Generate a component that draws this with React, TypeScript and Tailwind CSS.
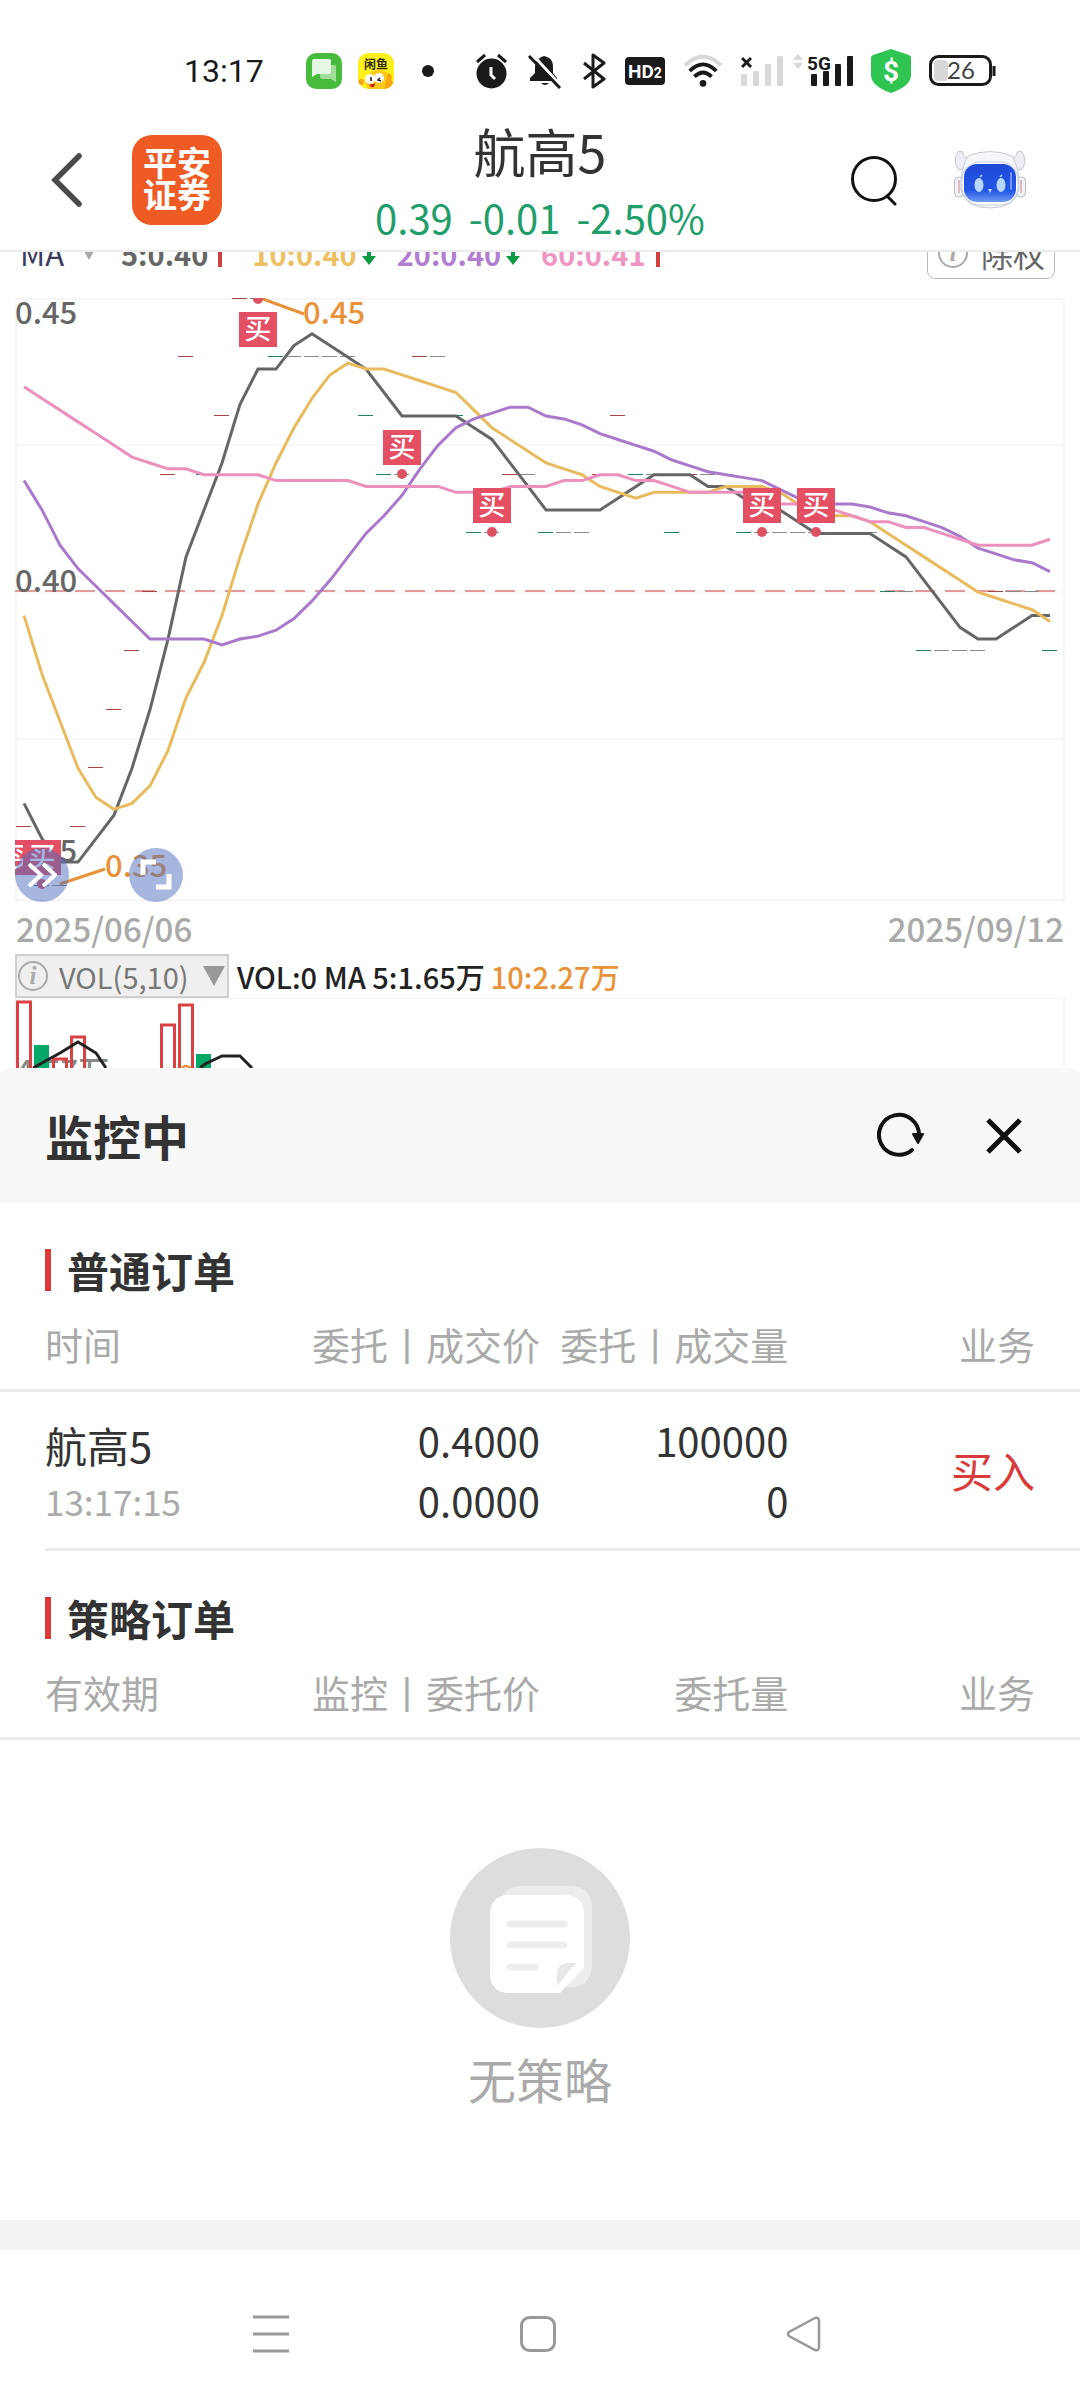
import React from "react";

const CANDLE_STEP = 18;
const FIRST_X = 24;

// closes from before the first visible candle, needed by the averages
const history = [
  0.45, 0.47, 0.44, 0.43, 0.44, 0.45, 0.46, 0.42, 0.44, 0.42, 0.45, 0.43, 0.44,
  0.42, 0.4, 0.38, 0.37, 0.36, 0.35,
];

const closes = [
  0.36, 0.35, 0.35, 0.36, 0.37, 0.38, 0.39, 0.4, 0.42, 0.44, 0.42, 0.43, 0.45,
  0.45, 0.44, 0.44, 0.44, 0.44, 0.44, 0.43, 0.42, 0.42, 0.44, 0.44, 0.43, 0.41,
  0.41, 0.42, 0.42, 0.41, 0.41, 0.41, 0.42, 0.43, 0.42, 0.42, 0.41, 0.42, 0.42,
  0.42, 0.41, 0.41, 0.41, 0.41, 0.41, 0.41, 0.41, 0.41, 0.4, 0.4, 0.39, 0.39,
  0.39, 0.39, 0.4, 0.4, 0.4, 0.39,
];

const ma60 = [
  0.435, 0.433, 0.431, 0.429, 0.427, 0.425, 0.423, 0.422, 0.421, 0.421, 0.42,
  0.42, 0.42, 0.42, 0.419, 0.419, 0.419, 0.419, 0.419, 0.418, 0.418, 0.418,
  0.418, 0.418, 0.417, 0.417, 0.417, 0.418, 0.418, 0.418, 0.419, 0.419, 0.42,
  0.42, 0.419, 0.419, 0.418, 0.417, 0.417, 0.417, 0.417, 0.416, 0.415, 0.415,
  0.415, 0.414, 0.413, 0.412, 0.412, 0.411, 0.411, 0.41, 0.409, 0.408, 0.408,
  0.408, 0.408, 0.409,
];

const markers = [
  { index: 0, top: 840, dot: 0 },
  { index: 1, top: 840, dot: 884 },
  { index: 13, top: 312, dot: 299 },
  { index: 21, top: 430, dot: 474 },
  { index: 26, top: 488, dot: 532 },
  { index: 41, top: 488, dot: 532 },
  { index: 44, top: 488, dot: 532 },
];

const xOf = (index: number) => FIRST_X + index * CANDLE_STEP;
const yOf = (price: number) => 298.6 + (0.45 - price) * 5870;

function average(days: number) {
  const all = [...history, ...closes];
  return closes.map((_, i) => {
    const end = history.length + i + 1;
    const sum = all.slice(end - days, end).reduce((a, b) => a + b, 0);
    return sum / days;
  });
}

function toPoints(values: number[]) {
  return values.map((v, i) => `${xOf(i)},${yOf(v)}`).join(" ");
}

function candleColor(index: number) {
  const before = index === 0 ? 0.35 : closes[index - 1];
  if (closes[index] > before) return "#a84644";
  if (closes[index] < before) return "#1f8068";
  return "#8a8a8a";
}

function StatusBar() {
  return (
    <div className="flex items-center pt-12 pl-[184px] text-[#1a1a1a]">
      <span className="w-[122px] font-[Roboto,sans-serif] text-[32px] leading-[46px]">
        13:17
      </span>
      <div className="flex gap-4">
        <svg width="36" height="36" viewBox="0 0 36 36">
          <rect width="36" height="36" rx="10" fill="#46bb3c" />
          <path
            d="M14 12h14a2 2 0 0 1 2 2v15l-5-3H16a2 2 0 0 1-2-2z"
            fill="#a2dd9b"
          />
          <path
            d="M8 6h15a2 2 0 0 1 2 2v11a2 2 0 0 1-2 2H11l-5 3V8a2 2 0 0 1 2-2z"
            fill="#e6f7e3"
          />
        </svg>
        <svg width="36" height="36" viewBox="0 0 36 36">
          <defs>
            <clipPath id="fish">
              <rect width="36" height="36" rx="10" />
            </clipPath>
          </defs>
          <g clipPath="url(#fish)">
            <rect width="36" height="36" fill="#fdf01c" />
            <ellipse cx="21" cy="29" rx="13" ry="12" fill="#ffc918" />
            <path d="M30 20l4 3-1 4 3 3-4 6h-6z" fill="#f5a80e" />
            <circle cx="3" cy="29" r="3" fill="#f7a51c" />
            <circle cx="12" cy="26" r="5" fill="#fff" />
            <circle cx="21" cy="25" r="5" fill="#fff" />
            <path
              d="M13 24v4M22 25l-2 2 3 1"
              stroke="#222"
              strokeWidth="1.6"
              fill="none"
            />
            <path d="M11 31q4 1 6-1 0 5-4 4z" fill="#c81d12" />
          </g>
          <text x="6" y="16" fontSize="12" fontWeight="700" fill="#2b2b00">
            闲鱼
          </text>
        </svg>
      </div>
      <span className="mr-10 ml-7 size-3 rounded-full bg-[#1a1a1a]" />
      <div className="flex items-center gap-[18px]">
        <svg width="35" height="36" viewBox="0 0 35 36" fill="none">
          <circle cx="17.500" cy="20.500" r="15" fill="#1a1a1a" />
          <path
            d="M3 9l8-7M32 9l-8-7"
            stroke="#1a1a1a"
            strokeWidth="3"
          />
          <path d="M17 14v8l4 4" stroke="#fff" strokeWidth="3" />
        </svg>
        <svg width="36" height="36" viewBox="0 0 36 36">
          <path
            d="M17 3l3 1c5 2 6 6 6 10v6l4 5v3H3v-3l5-5v-6c0-5 3-9 9-11z"
            fill="#1a1a1a"
          />
          <path d="M14 30h8q-4 4-8 0z" fill="#1a1a1a" />
          <path d="M4 0l32 35" stroke="#fff" strokeWidth="3" />
          <path d="M2 3l31 32" stroke="#1a1a1a" strokeWidth="3" />
        </svg>
        <svg width="26" height="36" viewBox="0 0 26 36" fill="none">
          <path
            d="M3 10l20 16-11 8V2l11 8L3 26"
            stroke="#1a1a1a"
            strokeWidth="3"
            strokeLinejoin="round"
          />
        </svg>
        <svg width="40" height="28" viewBox="0 0 40 28">
          <rect width="40" height="28" rx="4" fill="#1a1a1a" />
          <text
            x="3"
            y="21"
            fontWeight="700"
            fontFamily="Roboto, sans-serif"
            fill="#fff"
          >
            <tspan fontSize="19">HD</tspan>
            <tspan fontSize="14">2</tspan>
          </text>
        </svg>
        <svg width="40" height="36" viewBox="0 0 42 36" fill="none">
          <path d="M2 12q19-18 38 0" stroke="#d8d8d8" strokeWidth="4" />
          <path d="M7 18q14-14 28 0" stroke="#1a1a1a" strokeWidth="4" />
          <path d="M12 24q9-9 18 0" stroke="#1a1a1a" strokeWidth="4" />
          <circle cx="21" cy="31" r="3.500" fill="#1a1a1a" />
        </svg>
        <svg width="112" height="36" viewBox="0 0 112 36">
          <g fill="#d8d8d8">
            <rect x="0" y="21" width="6" height="12" rx="1" />
            <rect x="12" y="18" width="6" height="15" rx="1" />
            <rect x="24" y="11" width="6" height="22" rx="1" />
            <rect x="36" y="3" width="6" height="30" rx="1" />
            <path d="M57 1l5 6h-10zM57 16l5-6h-10z" />
          </g>
          <path d="M1 5l9 9M10 5l-9 9" stroke="#1a1a1a" strokeWidth="3" />
          <g fill="#1a1a1a">
            <rect x="70" y="21" width="6" height="12" rx="1" />
            <rect x="82" y="18" width="6" height="15" rx="1" />
            <rect x="94" y="11" width="6" height="22" rx="1" />
            <rect x="106" y="3" width="6" height="30" rx="1" />
          </g>
          <text
            x="66"
            y="17"
            fontSize="19"
            fontWeight="700"
            fontFamily="Roboto, sans-serif"
            fill="#1a1a1a"
          >
            5G
          </text>
        </svg>
        <svg width="40" height="44" viewBox="0 0 40 44">
          <path
            d="M20 0l18 6 2 2v18q0 11-20 18Q0 37 0 26V8l2-2z"
            fill="#2fc552"
          />
          <text
            x="20"
            y="32"
            fontSize="28"
            fontWeight="700"
            textAnchor="middle"
            fontFamily="Roboto, sans-serif"
            fill="#fff"
          >
            $
          </text>
        </svg>
        <svg width="67" height="32" viewBox="0 0 67 32">
          <rect
            x="1.500"
            y="1.500"
            width="60"
            height="28"
            rx="8"
            fill="none"
            stroke="#1a1a1a"
            strokeWidth="3"
          />
          <rect x="5" y="5" width="14" height="21" rx="4" fill="#d8d8d8" />
          <path d="M65 11v10" stroke="#1a1a1a" strokeWidth="3" />
          <text
            x="32"
            y="24"
            fontSize="24"
            textAnchor="middle"
            fontFamily="Lato, sans-serif"
            fill="#444"
          >
            26
          </text>
        </svg>
      </div>
    </div>
  );
}

function Robot() {
  return (
    <svg width="72" height="60" viewBox="0 0 72 60" fill="none">
      <defs>
        <linearGradient id="visor" x1="0" y1="0" x2="0" y2="1">
          <stop offset="0" stopColor="#1f48d8" />
          <stop offset="0.7" stopColor="#2457e6" />
          <stop offset="1" stopColor="#6f9cf5" />
        </linearGradient>
      </defs>
      <path
        d="M5 1C0 6 0 15 5 20l6-2 3-10c-3 0-5-2-5-6zM67 1c5 5 5 14 0 19l-6-2-3-10c3 0 5-2 5-6z"
        fill="#eceef3"
        stroke="#c3c6cd"
      />
      <rect x="0.500" y="27" width="9" height="20" rx="4" fill="#f1f2f5" stroke="#b9bcc4" />
      <rect x="62.500" y="27" width="9" height="20" rx="4" fill="#f1f2f5" stroke="#b9bcc4" />
      <path d="M5 30v13M67 30v13" stroke="#d9aab0" strokeWidth="1.500" />
      <path
        d="M14 6q22-9 44 0 8 13 7 34-4 18-29 18T7 40Q6 19 14 6z"
        fill="#f5f6f9"
        stroke="#c9ccd3"
      />
      <rect x="8" y="12" width="56" height="43" rx="18" fill="#fff" stroke="#c3cde6" />
      <rect x="10" y="14" width="52" height="38" rx="13" fill="url(#visor)" />
      <ellipse cx="25" cy="35" rx="4.500" ry="7" fill="#b8d8ff" />
      <ellipse cx="47" cy="35" rx="4.500" ry="7" fill="#b8d8ff" />
      <path d="M26 27l2-2M46 27l2-2" stroke="#b8d8ff" strokeWidth="1.500" />
      <path d="M34 39h4l-2 4z" fill="#b8d8ff" />
      <path d="M57 23v16" stroke="#6f97f3" strokeWidth="2" strokeLinecap="round" />
    </svg>
  );
}

function Header() {
  return (
    <header className="grid grid-cols-[1fr_auto_1fr] items-center border-b-2 border-[#ececec] pt-5 pb-1">
      <div className="flex items-center pl-[50px]">
        <button type="button" aria-label="返回">
          <svg width="32" height="54" viewBox="0 0 32 54" fill="none">
            <path
              d="M29 3L5 27l24 24"
              stroke="#4a4a4a"
              strokeWidth="5.500"
              strokeLinecap="round"
            />
          </svg>
        </button>
        <a
          href="#home"
          className="ml-[50px] flex size-[90px] flex-col items-center justify-center rounded-[20px] bg-[#ef5b25] pb-1 text-[34px] leading-[32px] font-bold text-white"
        >
          <span>平安</span>
          <span>证券</span>
        </a>
      </div>
      <div className="flex flex-col items-center">
        <h1 className="text-[52px] leading-[74px] text-[#333]">航高5</h1>
        <p className="flex gap-4 text-[40px] leading-[58px] text-[#1f9e6c]">
          <span>0.39</span>
          <span>-0.01</span>
          <span>-2.50%</span>
        </p>
      </div>
      <div className="flex items-center justify-end gap-14 pr-[54px]">
        <button type="button" aria-label="搜索">
          <svg width="48" height="52" viewBox="0 0 48 52" fill="none">
            <circle cx="24" cy="25" r="21.500" stroke="#111" strokeWidth="3" />
            <path
              d="M37 42l8 8"
              stroke="#111"
              strokeWidth="3"
              strokeLinecap="round"
            />
          </svg>
        </button>
        <button type="button" aria-label="智能助手">
          <Robot />
        </button>
      </div>
    </header>
  );
}

function Info() {
  return (
    <svg width="32" height="32" viewBox="0 0 32 32">
      <circle cx="16" cy="16" r="14" fill="none" stroke="#aaa" strokeWidth="2" />
      <text
        x="16"
        y="24"
        fontSize="25"
        fontWeight="700"
        fontStyle="italic"
        textAnchor="middle"
        fontFamily="Liberation Serif, serif"
        fill="#aaa"
      >
        i
      </text>
    </svg>
  );
}

function UpArrow() {
  return (
    <svg width="16" height="28" viewBox="0 0 16 28">
      <path d="M6 28V10H1l7-9 7 9h-5v18z" fill="#cf3f3f" />
    </svg>
  );
}

function DownArrow() {
  return (
    <svg width="16" height="28" viewBox="0 0 16 28">
      <path d="M6 1v16H1l7 9 7-9h-5V1z" fill="#0c9b43" />
    </svg>
  );
}

function MaRow() {
  return (
    <div className="flex items-center pr-[25px] pl-5 text-[29px] leading-[54px] font-bold">
      <label className="flex items-center text-[#3c3c5c]">
        <select
          aria-label="主图指标"
          className="w-[61px] appearance-none text-[31px] font-normal outline-none"
        >
          <option>MA</option>
        </select>
        <svg width="16" height="14" viewBox="0 0 16 14">
          <path d="M0 0h16L8 14z" fill="#aaa" />
        </svg>
      </label>
      <span className="ml-6 flex items-center gap-1 text-[#666]">
        5:0.40
        <UpArrow />
      </span>
      <span className="ml-6 flex items-center gap-1 text-[#ecc063]">
        10:0.40
        <DownArrow />
      </span>
      <span className="ml-5 flex items-center gap-1 text-[#b07fd0]">
        20:0.40
        <DownArrow />
      </span>
      <span className="ml-5 flex items-center gap-1 text-[#ef95c2]">
        60:0.41
        <UpArrow />
      </span>
      <button
        type="button"
        className="ml-auto flex items-center gap-3 rounded-lg border border-[#bbb] px-[9px] text-[32px] leading-[50px] font-normal text-[#666]"
      >
        <Info />
        除权
      </button>
    </div>
  );
}

function PriceChart() {
  return (
    <svg viewBox="0 298 1080 604" className="block w-full" fill="none">
      <defs>
        <clipPath id="plot">
          <rect x="15" y="298" width="1050" height="603" />
        </clipPath>
      </defs>
      <rect x="16" y="299" width="1048" height="601" stroke="#f6f6f6" strokeWidth="2" />
      <path d="M15 445h1049M15 592h1049M15 739h1049" stroke="#f8f8f8" strokeWidth="2" />
      <path d="M15 591h1040" stroke="#e09a98" strokeWidth="2" strokeDasharray="20 10" />
      <g fontSize="31" fontWeight="500" fill="#666">
        <text x="15" y="324">0.45</text>
        <text x="15" y="592">0.40</text>
        <text x="15" y="862">0.35</text>
      </g>
      <g clipPath="url(#plot)">
        {closes.map((close, i) => (
          <rect
            key={i}
            x={xOf(i) - 8}
            y={Math.round(yOf(close)) - 1}
            width="15"
            height="1"
            fill={candleColor(i)}
          />
        ))}
        <polyline points={toPoints(average(5))} stroke="#666" strokeWidth="3" />
        <polyline points={toPoints(average(10))} stroke="#e9bb5f" strokeWidth="3" />
        <polyline points={toPoints(average(20))} stroke="#a97acb" strokeWidth="3" />
        <polyline points={toPoints(ma60)} stroke="#ec90bd" strokeWidth="3" />
        {markers.map((m) => (
          <g key={m.index}>
            <rect x={xOf(m.index) - 19} y={m.top} width="38" height="35" fill="#e44f63" />
            <text
              x={xOf(m.index)}
              y={m.top + 27}
              fontSize="27"
              fontWeight="500"
              textAnchor="middle"
              fill="#fff"
            >
              买
            </text>
            {m.dot > 0 && (
              <circle cx={xOf(m.index)} cy={m.dot} r="5" fill="#dc5263" />
            )}
          </g>
        ))}
      </g>
      <path d="M263 299l41 15M60 884l45-15" stroke="#e8923a" strokeWidth="3" />
      <g fontSize="31" fontWeight="500" fill="#e8923a">
        <text x="303" y="324">0.45</text>
        <text x="105" y="877">0.35</text>
      </g>
    </svg>
  );
}

function VolumeChart() {
  return (
    <svg viewBox="0 998 1080 70" className="block w-full" fill="none">
      <path d="M15 1068V998h1049v70" stroke="#f4f4f4" strokeWidth="2" />
      <text x="16" y="1083" fontSize="31" fontWeight="500" fill="#888">
        4.57万
      </text>
      <g stroke="#d94242" strokeWidth="3">
        <path d="M17.500 1080v-78h13v78" />
        <path d="M53.500 1080v-21h13v21" />
        <path d="M71.500 1080v-43h13v43" />
        <path d="M161.500 1080v-55h13v55" />
        <path d="M179.500 1080v-75h13v75" />
      </g>
      <g fill="#06a868">
        <rect x="34" y="1045" width="15" height="30" />
        <rect x="196" y="1054" width="15" height="30" />
      </g>
      <circle cx="186" cy="1071" r="5" stroke="#e8923a" strokeWidth="2.500" />
      <path
        d="M33 1068l9-5 18-10 18-11 18 11 10 15M200 1068l5-4 17-8h18l12 12"
        stroke="#222"
        strokeWidth="3"
      />
    </svg>
  );
}

function ChartArea() {
  return (
    <section className="overflow-hidden">
      <div className="-mt-[26px]">
        <MaRow />
        <div className="relative mt-[18px]">
          <PriceChart />
          <button
            type="button"
            aria-label="展开"
            className="absolute bottom-0 left-[15px] flex size-[54px] items-center justify-center rounded-full bg-[#506ebe]/50"
          >
            <svg width="30" height="26" viewBox="0 0 30 26" fill="none">
              <path
                d="M2 2l12 11L2 24M16 2l12 11-12 11"
                stroke="#fff"
                strokeWidth="4"
              />
            </svg>
          </button>
          <button
            type="button"
            aria-label="全屏"
            className="absolute bottom-0 left-[129px] flex size-[54px] items-center justify-center rounded-full bg-[#506ebe]/50"
          >
            <svg width="32" height="32" viewBox="0 0 32 32" fill="none">
              <path
                d="M3 16V3h13M29 15v13H16"
                stroke="#fff"
                strokeWidth="5"
              />
            </svg>
          </button>
        </div>
        <div className="flex justify-between px-4 text-[33px] leading-[52px] font-medium text-[#aaa]">
          <time>2025/06/06</time>
          <time>2025/09/12</time>
        </div>
        <div className="flex items-center pl-[15px] text-[29px] leading-[44px]">
          <label className="flex items-center border-2 border-[#cfcfcf] bg-[#efefef] pr-0.5 text-[#777]">
            <Info />
            <select
              aria-label="副图指标"
              className="ml-2.5 w-[144px] appearance-none leading-[40px] outline-none"
            >
              <option>VOL(5,10)</option>
            </select>
            <svg width="22" height="20" viewBox="0 0 22 20">
              <path d="M0 0h22L11 20z" fill="#999" />
            </svg>
          </label>
          <span className="ml-2 font-medium text-[#222]">
            VOL:0 MA 5:1.65万
          </span>
          <span className="ml-1.5 font-medium text-[#e8923a]">10:2.27万</span>
        </div>
        <VolumeChart />
      </div>
    </section>
  );
}

type OrderTableProps = {
  title: string;
  columns: string[];
  children?: React.ReactNode;
};

function OrderTable({ title, columns, children }: OrderTableProps) {
  return (
    <section className="pt-[43px]">
      <h3 className="flex items-center gap-4 pl-[45px] text-[42px] leading-[48px] font-bold text-[#333]">
        <span className="h-[42px] w-1.5 bg-[#dc3838]" />
        {title}
      </h3>
      <table className="w-full table-fixed border-separate border-spacing-0">
        <colgroup>
          <col className="w-[28%]" />
          <col className="w-[22%]" />
          <col className="w-[23%]" />
          <col className="w-[27%]" />
        </colgroup>
        <thead>
          <tr className="text-right text-[38px] leading-[56px] whitespace-nowrap text-[#aaa]">
            {columns.map((column) => (
              <th
                key={column}
                className="border-b-3 border-[#ebebeb] pt-[22px] pb-[17px] font-normal first:pl-[45px] first:text-left last:pr-[45px]"
              >
                {column}
              </th>
            ))}
          </tr>
        </thead>
        {children}
      </table>
    </section>
  );
}

function OrderSheet() {
  return (
    <main className="bg-white">
      <div className="flex items-center rounded-t-lg bg-[#f7f7f7] py-[35px] pr-[57px] pl-[45px]">
        <h2 className="text-[48px] leading-[65px] font-bold text-[#333]">
          监控中
        </h2>
        <button type="button" aria-label="刷新" className="ml-auto">
          <svg width="48" height="48" viewBox="0 0 48 48" fill="none">
            <path
              d="M35 38A20 20 0 1 1 42 23"
              stroke="#111"
              strokeWidth="4"
              strokeLinecap="round"
            />
            <path
              d="M36 22h10l-5 9z"
              fill="#111"
              stroke="#111"
              strokeWidth="2"
              strokeLinejoin="round"
            />
          </svg>
        </button>
        <button type="button" aria-label="关闭" className="ml-[60px]">
          <svg width="38" height="38" viewBox="0 0 38 38" fill="none">
            <path d="M3 3l32 32M35 3L3 35" stroke="#111" strokeWidth="5" />
          </svg>
        </button>
      </div>

      <OrderTable
        title="普通订单"
        columns={["时间", "委托丨成交价", "委托丨成交量", "业务"]}
      >
        <tbody>
          <tr className="text-right text-[40px] leading-[60px] text-[#333]">
            <td className="pt-6 pb-[18px] pl-[45px] text-left leading-[56px]">
              <div className="text-[42px]">航高5</div>
              <div className="text-[35px] text-[#aaa]">13:17:15</div>
            </td>
            <td className="py-[18px]">
              <div>0.4000</div>
              <div>0.0000</div>
            </td>
            <td className="py-[18px]">
              <div>100000</div>
              <div>0</div>
            </td>
            <td className="py-[18px] pr-[45px] text-[42px] text-[#d93a3a]">
              买入
            </td>
          </tr>
        </tbody>
      </OrderTable>
      <div className="ml-[45px] h-[3px] bg-[#ebebeb]" />

      <OrderTable
        title="策略订单"
        columns={["有效期", "监控丨委托价", "委托量", "业务"]}
      />
      <div className="flex flex-col items-center pt-[108px] pb-[110px]">
        <svg width="180" height="180" viewBox="0 0 180 180">
          <circle cx="90" cy="90" r="90" fill="#ddd" />
          <rect x="50" y="38" width="92" height="101" rx="20" fill="#ededed" />
          <path
            d="M60 47h54q20 0 20 20v53l-24 25H60q-20 0-20-20V67q0-20 20-20z"
            fill="#fff"
          />
          <path
            d="M60 76h54M60 97h54M60 119h25"
            stroke="#ededed"
            strokeWidth="7"
            strokeLinecap="round"
          />
          <path d="M107 138v-11q0-12 12-12h7z" fill="#e8e8e8" />
        </svg>
        <p className="mt-[18px] text-[48px] leading-[64px] text-[#aaa]">
          无策略
        </p>
      </div>
    </main>
  );
}

function NavBar() {
  return (
    <nav className="flex items-center justify-between border-t-[30px] border-[#f2f3f5] pt-[65px] pr-[257px] pb-[47px] pl-[253px]">
      <button type="button" aria-label="最近任务">
        <svg width="36" height="38" viewBox="0 0 36 38">
          <path d="M0 2h36M0 19h36M0 36h36" stroke="#999" strokeWidth="3" />
        </svg>
      </button>
      <button type="button" aria-label="主页">
        <svg width="36" height="38" viewBox="0 0 36 38" fill="none">
          <rect
            x="1.500"
            y="2.500"
            width="33"
            height="33"
            rx="8"
            stroke="#999"
            strokeWidth="3"
          />
        </svg>
      </button>
      <button type="button" aria-label="后退">
        <svg width="36" height="38" viewBox="0 0 36 38" fill="none">
          <path
            d="M28 3L2 17q-2 2 0 4l26 14q4 1 4-3V6q0-4-4-3z"
            stroke="#999"
            strokeWidth="2.500"
          />
        </svg>
      </button>
    </nav>
  );
}

export default function App() {
  return (
    <div className="flex min-h-screen flex-col bg-white font-['Noto_Sans_CJK_SC',sans-serif]">
      <StatusBar />
      <Header />
      <ChartArea />
      <OrderSheet />
      <NavBar />
    </div>
  );
}
